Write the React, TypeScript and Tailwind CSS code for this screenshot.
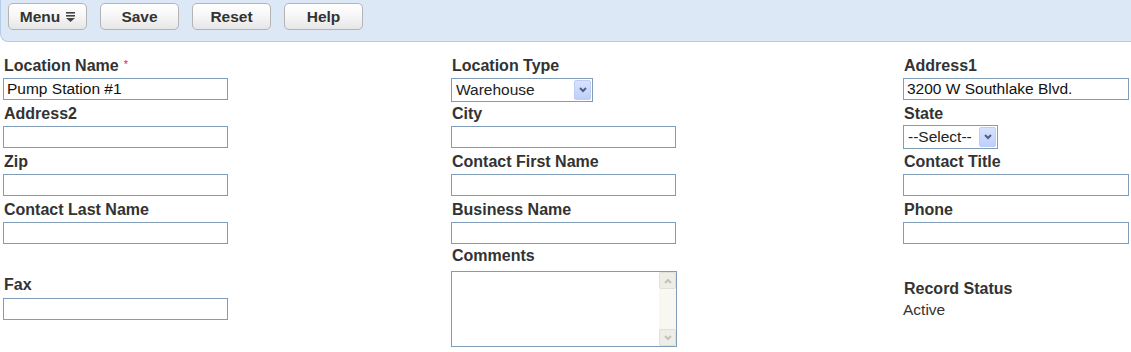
import React from "react";

const font = { fontFamily: '"Liberation Sans", Arial, sans-serif' };

function ToolButton({ children }: { children: React.ReactNode }) {
  return (
    <button className="flex h-[27px] w-[79px] items-center justify-center gap-[6px] rounded-[5px] border border-[#b4b4b4] bg-[linear-gradient(180deg,#ffffff_0%,#f7f7f7_45%,#e6e6e6_100%)] text-[15.5px] font-bold text-[#333] shadow-[inset_0_1px_0_#ffffff]">
      {children}
    </button>
  );
}

function MenuGlyph() {
  return (
    <svg width="9" height="10" viewBox="0 0 9 10" className="mt-[1px]">
      <rect x="0" y="0" width="9" height="1.6" fill="#444" />
      <rect x="0" y="3" width="9" height="1.6" fill="#444" />
      <path d="M0 6 H9 L4.5 10 Z" fill="#444" />
    </svg>
  );
}

function Label({ text, required }: { text: string; required?: boolean }) {
  return (
    <div className="h-[18px] pl-px text-[16px] font-bold leading-[18px] text-[#333]">
      {text}
      {required && <span className="ml-[5px] align-top text-[11px] font-normal leading-[14px] text-[#e22]">*</span>}
    </div>
  );
}

function TextBox({ value = "", wide }: { value?: string; wide?: boolean }) {
  return (
    <input
      readOnly
      defaultValue={value}
      className={`mt-[3px] block h-[22px] ${wide ? "w-[226px]" : "w-[225px]"} border border-[#7f9db9] bg-white px-[3px] text-[15.5px] leading-[20px] text-[#111] outline-none`}
    />
  );
}

function Chevron({ color }: { color: string }) {
  return (
    <svg width="8" height="6" viewBox="0 0 8 6">
      <path d="M1 1 L4 4 L7 1" stroke={color} strokeWidth="2" fill="none" />
    </svg>
  );
}

function SelectBox({ value, width, extra }: { value: string; width: string; extra: string }) {
  return (
    <div className={`flex h-[24px] ${width} ${extra} items-center border border-[#7f9db9] bg-white pl-[4px] pr-px`}>
      <span className="flex-1 text-[15.5px] leading-[20px] text-[#222]">{value}</span>
      <span className="flex h-[20px] w-[17px] items-center justify-center rounded-[2px] border border-[#bccdf6] bg-[linear-gradient(180deg,#d7e2fd,#bfcffa)]">
        <Chevron color="#4d6185" />
      </span>
    </div>
  );
}

function Field({ label, value, required, wide }: { label: string; value?: string; required?: boolean; wide?: boolean }) {
  return (
    <div>
      <Label text={label} required={required} />
      <TextBox value={value} wide={wide} />
    </div>
  );
}

export default function App() {
  return (
    <div style={font} className="h-[352px] w-[1131px] overflow-hidden bg-white">
      <div className="flex h-[42px] items-start gap-[13px] rounded-bl-[8px] border-b border-l border-[#b6cde9] bg-[#dce8f5] pl-[7px] pt-[3px]">
        <ToolButton>
          Menu <MenuGlyph />
        </ToolButton>
        <ToolButton>Save</ToolButton>
        <ToolButton>Reset</ToolButton>
        <ToolButton>Help</ToolButton>
      </div>

      <div className="pl-[3px] pt-[15px]">
        <div className="mb-[5px] grid grid-cols-[448px_452px_1fr]">
          <Field label="Location Name" value="Pump Station #1" required />
          <div>
            <Label text="Location Type" />
            <SelectBox value="Warehouse" width="w-[142px]" extra="mt-[3px] mb-[-2px]" />
          </div>
          <Field label="Address1" value="3200 W Southlake Blvd." wide />
        </div>

        <div className="mb-[5px] grid grid-cols-[448px_452px_1fr]">
          <Field label="Address2" />
          <Field label="City" />
          <div>
            <Label text="State" />
            <SelectBox value="--Select--" width="w-[95px]" extra="mt-[2px] mb-[-1px]" />
          </div>
        </div>

        <div className="mb-[5px] grid grid-cols-[448px_452px_1fr]">
          <Field label="Zip" />
          <Field label="Contact First Name" />
          <Field label="Contact Title" wide />
        </div>

        <div className="mb-[3px] grid grid-cols-[448px_452px_1fr]">
          <Field label="Contact Last Name" />
          <Field label="Business Name" />
          <Field label="Phone" wide />
        </div>

        <div className="grid grid-cols-[448px_452px_1fr] items-center">
          <div className="pt-[1px]">
            <Label text="Fax" />
            <input readOnly className="mt-[4px] block h-[22px] w-[225px] border border-[#7f9db9] bg-white outline-none" />
          </div>
          <div>
            <Label text="Comments" />
            <div className="mt-[6px] flex h-[76px] w-[226px] border border-[#7f9db9] bg-white">
              <div className="flex-1" />
              <div className="flex w-[17px] flex-col justify-between bg-[#f8f7f1]">
                <div className="flex h-[17px] items-center justify-center rounded-[2px] border border-[#e3e1d6] bg-[#eeede6]">
                  <svg width="8" height="6" viewBox="0 0 8 6">
                    <path d="M1 5 L4 2 L7 5" stroke="#c3c3bb" strokeWidth="2" fill="none" />
                  </svg>
                </div>
                <div className="flex h-[17px] items-center justify-center rounded-[2px] border border-[#e3e1d6] bg-[#eeede6]">
                  <Chevron color="#c3c3bb" />
                </div>
              </div>
            </div>
          </div>
          <div className="pt-[4px]">
            <Label text="Record Status" />
            <div className="mt-[3px] text-[15.5px] leading-[18px] text-[#333]">Active</div>
          </div>
        </div>
      </div>
    </div>
  );
}
